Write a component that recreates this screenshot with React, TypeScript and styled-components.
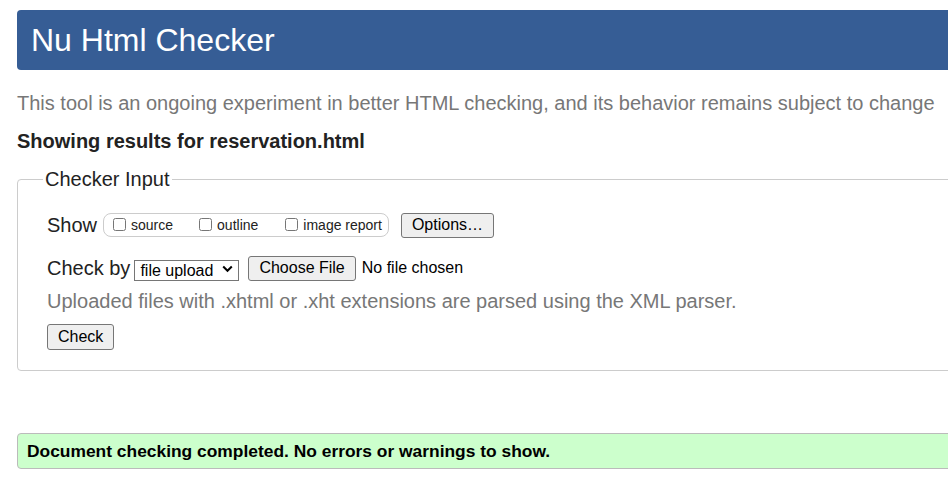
import React from "react";
import styled, { createGlobalStyle } from "styled-components";

const Global = createGlobalStyle`
  html, body {
    margin: 0;
    padding: 0;
    overflow: hidden;
    background: #fff;
  }
  body {
    font-family: "Liberation Sans", Arial, Helvetica, sans-serif;
    color: #222;
  }
`;

const Page = styled.div`
  width: 960px;
  padding: 10px 0 0 17px;
  box-sizing: border-box;
`;

const Header = styled.h1`
  margin: 0;
  height: 60px;
  line-height: 60px;
  padding-left: 14px;
  background: #365d95;
  color: #fff;
  font-size: 32px;
  font-weight: normal;
  border-radius: 4px;
`;

const Tagline = styled.p`
  margin: 21px 0 0;
  font-size: 20px;
  line-height: 24px;
  color: #777;
  white-space: nowrap;
`;

const ResultsFor = styled.h2`
  margin: 14px 0 0;
  font-size: 20px;
  line-height: 24px;
  font-weight: bold;
  color: #222;
`;

const Fieldset = styled.fieldset`
  margin: 14px 0 0;
  padding: 21px 0 20px 29px;
  border: 1px solid #ccc;
  border-radius: 4px;
  min-width: 0;
`;

const Legend = styled.legend`
  margin-left: -4px;
  padding: 0 2px;
  font-size: 20px;
  line-height: 24px;
  color: #222;
`;

const Rows = styled.div`
  display: flex;
  flex-direction: column;
`;

const Row = styled.div<{ $top?: number }>`
  display: flex;
  align-items: center;
  height: 26px;
  margin-top: ${(p) => p.$top ?? 0}px;
  font-size: 20px;
  white-space: nowrap;
`;

const Label = styled.span`
  font-size: 20px;
  color: #222;
`;

const ToggleGroup = styled.div`
  display: flex;
  align-items: center;
  height: 22px;
  margin-left: 6px;
  padding: 0 6px 0 6px;
  border: 1px solid #ccc;
  border-radius: 8px;
  font-size: 14px;
`;

const Toggle = styled.label<{ $gap?: number }>`
  display: flex;
  align-items: center;
  margin-left: ${(p) => p.$gap ?? 0}px;
  color: #222;

  input {
    margin: 0 5px 2px 3px;
    width: 13px;
    height: 13px;
  }
`;

const Button = styled.button<{ $left?: number; $h?: number }>`
  height: ${(p) => p.$h ?? 25}px;
  margin-left: ${(p) => p.$left ?? 0}px;
  padding: 0 10px;
  font-family: "Liberation Sans", Arial, Helvetica, sans-serif;
  font-size: 16px;
  color: #000;
  background: #efefef;
  border: 1px solid #767676;
  border-radius: 3px;
`;

const SelectWrap = styled.div`
  position: relative;
  margin-left: 4px;
  height: 21px;
`;

const Select = styled.select`
  appearance: none;
  -webkit-appearance: none;
  height: 21px;
  width: 105px;
  padding: 0 0 0 5px;
  font-family: "Liberation Sans", Arial, Helvetica, sans-serif;
  font-size: 16px;
  color: #000;
  background: #fff;
  border: 1px solid #767676;
  border-radius: 0;
  box-sizing: border-box;
`;

const Chevron = styled.svg`
  position: absolute;
  right: 6px;
  top: 7px;
  pointer-events: none;
`;

const FileName = styled.span`
  margin-left: 6px;
  font-size: 16px;
  color: #000;
`;

const Hint = styled.p`
  margin: 8px 0 0;
  font-size: 20px;
  line-height: 24px;
  color: #777;
  white-space: nowrap;
`;

const Success = styled.p`
  margin: 62px 0 0;
  height: 34px;
  line-height: 34px;
  padding-left: 9px;
  background: #ccffcc;
  border: 1px solid #bbb;
  border-radius: 4px;
  font-size: 17.4px;
  font-weight: bold;
  color: #000;
`;

export default function App() {
  return (
    <>
      <Global />
      <Page>
        <Header>Nu Html Checker</Header>
        <Tagline>
          This tool is an ongoing experiment in better HTML checking, and its behavior remains subject to change
        </Tagline>
        <ResultsFor>Showing results for reservation.html</ResultsFor>
        <Fieldset>
          <Legend>Checker Input</Legend>
          <Rows>
            <Row>
              <Label>Show</Label>
              <ToggleGroup>
                <Toggle>
                  <input type="checkbox" />
                  source
                </Toggle>
                <Toggle $gap={23}>
                  <input type="checkbox" />
                  outline
                </Toggle>
                <Toggle $gap={24}>
                  <input type="checkbox" />
                  image report
                </Toggle>
              </ToggleGroup>
              <Button $left={12}>Options…</Button>
            </Row>
            <Row $top={17}>
              <Label>Check by</Label>
              <SelectWrap>
                <Select defaultValue="file">
                  <option value="address">address</option>
                  <option value="file">file upload</option>
                  <option value="text">text input</option>
                </Select>
                <Chevron width="11" height="8" viewBox="0 0 11 8">
                  <path d="M1.2 1.5 L5.5 5.8 L9.8 1.5" fill="none" stroke="#000" strokeWidth="2" />
                </Chevron>
              </SelectWrap>
              <Button $left={9}>Choose File</Button>
              <FileName>No file chosen</FileName>
            </Row>
            <Hint>Uploaded files with .xhtml or .xht extensions are parsed using the XML parser.</Hint>
            <Row $top={11}>
              <Button $h={26}>Check</Button>
            </Row>
          </Rows>
        </Fieldset>
        <Success>Document checking completed. No errors or warnings to show.</Success>
      </Page>
    </>
  );
}
